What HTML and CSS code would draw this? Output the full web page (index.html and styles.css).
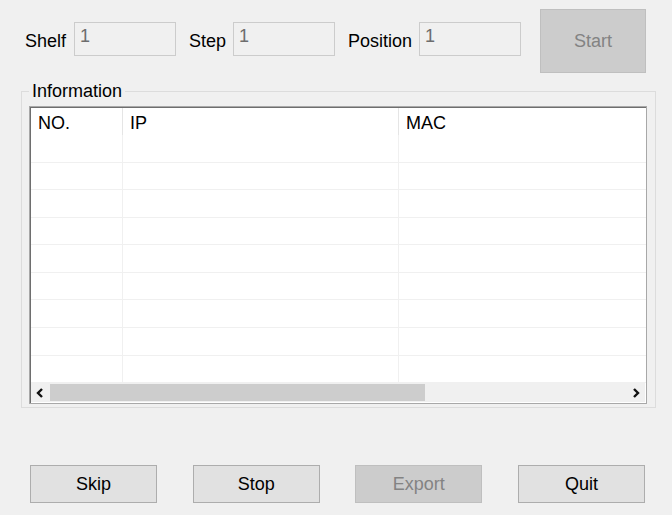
FILE: index.html
```html
<!DOCTYPE html>
<html>
<head>
<meta charset="utf-8">
<link rel="stylesheet" href="styles.css">
</head>
<body>
<div class="app">
  <div class="top">
    <div class="field"><span class="label">Shelf</span><div class="box">1</div></div>
    <div class="field"><span class="label">Step</span><div class="box">1</div></div>
    <div class="field"><span class="label">Position</span><div class="box">1</div></div>
    <div class="btn big disabled">Start</div>
  </div>
  <fieldset class="group">
    <legend class="legend">Information</legend>
    <div class="list">
      <div class="row head">
        <div class="c c1">NO.</div><div class="c c2">IP</div><div class="c c3">MAC</div>
      </div>
      <div class="row"><div class="c c1"></div><div class="c c2"></div><div class="c c3"></div></div>
      <div class="row"><div class="c c1"></div><div class="c c2"></div><div class="c c3"></div></div>
      <div class="row"><div class="c c1"></div><div class="c c2"></div><div class="c c3"></div></div>
      <div class="row"><div class="c c1"></div><div class="c c2"></div><div class="c c3"></div></div>
      <div class="row"><div class="c c1"></div><div class="c c2"></div><div class="c c3"></div></div>
      <div class="row"><div class="c c1"></div><div class="c c2"></div><div class="c c3"></div></div>
      <div class="row"><div class="c c1"></div><div class="c c2"></div><div class="c c3"></div></div>
      <div class="row"><div class="c c1"></div><div class="c c2"></div><div class="c c3"></div></div>
      <div class="row"><div class="c c1"></div><div class="c c2"></div><div class="c c3"></div></div>
      <div class="scroll">
        <div class="arrow"><svg width="10" height="10" viewBox="0 0 10 10"><path d="M7 1 L3 5 L7 9" fill="none" stroke="#111" stroke-width="2.4"/></svg></div>
        <div class="track"><div class="thumb"></div></div>
        <div class="arrow"><svg width="10" height="10" viewBox="0 0 10 10"><path d="M3 1 L7 5 L3 9" fill="none" stroke="#111" stroke-width="2.4"/></svg></div>
      </div>
    </div>
  </fieldset>
  <div class="bottom">
    <div class="btn">Skip</div>
    <div class="btn">Stop</div>
    <div class="btn disabled">Export</div>
    <div class="btn">Quit</div>
  </div>
</div>
</body>
</html>
```
FILE: styles.css
```css
html, body {
  margin: 0;
  padding: 0;
  background: #f0f0f0;
}
body {
  font-family: "Liberation Sans", Arial, sans-serif;
  font-size: 18px;
  color: #000;
}
.app {
  width: 672px;
  height: 515px;
  padding-top: 9px;
  box-sizing: border-box;
}
.top {
  display: flex;
  align-items: flex-start;
  padding-left: 25px;
  height: 64px;
}
.field {
  display: flex;
  align-items: flex-start;
  gap: 7px;
  margin-top: 13px;
  margin-right: 13px;
}
.field:first-child {
  gap: 8px;
}
.label {
  line-height: 34px;
  padding-top: 2px;
}
.box {
  width: 102px;
  height: 34px;
  box-sizing: border-box;
  border: 1px solid #cccccc;
  background: #f0f0f0;
  color: #6d6d6d;
  padding: 3px 0 0 5px;
  line-height: 20px;
}
.btn {
  width: 127px;
  height: 38px;
  box-sizing: border-box;
  border: 1px solid #adadad;
  background: #e1e1e1;
  display: flex;
  align-items: center;
  justify-content: center;
}
.btn.disabled {
  background: #cccccc;
  border-color: #bfbfbf;
  color: #838383;
}
.btn.big {
  width: 106px;
  height: 64px;
  margin-left: 6px;
}
.group {
  margin: 8px 0 0 21px;
  width: 635px;
  box-sizing: border-box;
  border: 1px solid #dcdcdc;
  padding: 5px 8px 3px 7px;
  min-width: 0;
}
.legend {
  padding: 0 3px;
  line-height: 20px;
}
.list {
  height: 298px;
  box-sizing: border-box;
  border: 1px solid #a8a8a8;
  box-shadow: inset 1px 1px 0 #6e6e6e;
  background: #fff;
  padding: 1px 0 0 1px;
  display: flex;
  flex-direction: column;
  overflow: hidden;
}
.row {
  display: flex;
  height: 27.57px;
  box-sizing: border-box;
  border-bottom: 1px solid #f0f0f0;
  flex: none;
}
.row.head {
  height: 27px;
  border-bottom: none;
}
.c {
  box-sizing: border-box;
  border-right: 1px solid #f0f0f0;
  padding-left: 7px;
  line-height: 30px;
}
.head .c {
  border-right-color: #e5e5e5;
}
.c1 { width: 92px; }
.c2 { width: 276px; }
.c3 { flex: 1; border-right: none; }
.scroll {
  margin-top: auto;
  height: 19px;
  flex: none;
  display: flex;
  background: #f0f0f0;
  margin-right: 1px;
  margin-bottom: 1px;
}
.arrow {
  width: 18px;
  display: flex;
  align-items: center;
  justify-content: center;
}
.track {
  flex: 1;
  padding: 1px 1px;
}
.thumb {
  width: 375px;
  height: 17px;
  background: #cdcdcd;
}
.bottom {
  display: flex;
  gap: 35.67px;
  margin-top: 57px;
  padding-left: 30px;
}
```
